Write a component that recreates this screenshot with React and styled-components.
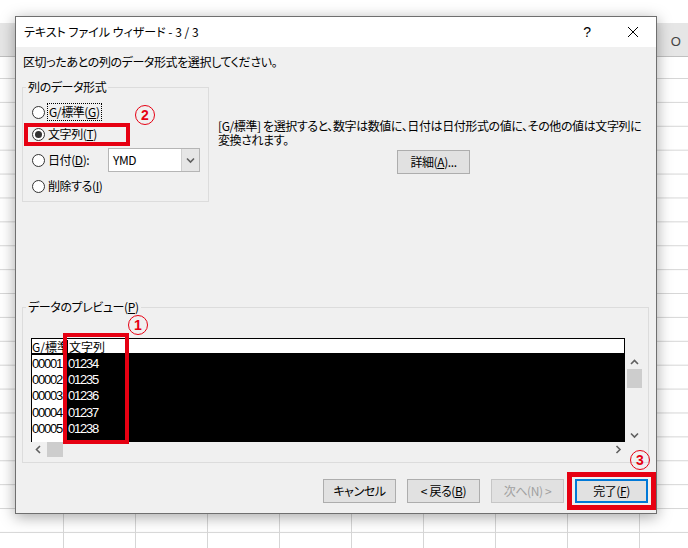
import React from 'react';
import styled, { createGlobalStyle } from 'styled-components';

const RED = '#e60012';

const GlobalStyle = createGlobalStyle`
  html, body {
    margin: 0;
    padding: 0;
  }
  body {
    font-family: "Noto Sans CJK JP", "Liberation Sans", sans-serif;
    font-size: 12px;
    font-feature-settings: "palt";
    letter-spacing: -0.4px;
    color: #000;
  }
`;

const Sheet = styled.div`
  position: relative;
  width: 688px;
  height: 548px;
  overflow: hidden;
  background-color: #fff;
  background-image: linear-gradient(to bottom, #d6d6d6 1px, transparent 1px),
    linear-gradient(to right, #d6d6d6 1px, transparent 1px);
  background-size: 100% 23.9px, 72px 100%;
  background-position: 0 78px, 63px 0;
`;

const SheetTop = styled.div`
  height: 23px;
  background: #fff;
`;

const ColumnHeader = styled.div`
  display: grid;
  grid-template-columns: 639px 72px;
  height: 33px;
  background: #e6e6e6;
  border-bottom: 1px solid #c0c0c0;
`;

const HeaderCell = styled.div`
  display: flex;
  align-items: center;
  justify-content: center;
  padding-top: 4px;
  border-left: 1px solid #cfcfcf;
  color: #444;
  font-family: "Liberation Sans", sans-serif;
  font-size: 13px;
`;

const Dialog = styled.div`
  position: absolute;
  left: 15px;
  top: 16px;
  width: 640px;
  height: 496px;
  display: flex;
  flex-direction: column;
  background: #f0f0f0;
  border: 1px solid #6f6f6f;
  box-shadow: 0 3px 14px rgba(0, 0, 0, 0.35);
`;

const TitleBar = styled.div`
  display: flex;
  align-items: center;
  height: 30px;
  background: #fff;
`;

const Title = styled.div`
  flex: 1;
  padding-left: 8px;
  line-height: 16px;
  letter-spacing: 0;
`;

const TitleButton = styled.div`
  width: 46px;
  height: 30px;
  display: flex;
  align-items: center;
  justify-content: center;
  font-family: "Liberation Sans", sans-serif;
  font-size: 14px;
`;

const Body = styled.div`
  flex: 1;
  display: flex;
  flex-direction: column;
  padding: 7px 7px 9px 6px;
`;

const Instruction = styled.div`
  padding-left: 1px;
  line-height: 16px;
`;

const TopRow = styled.div`
  display: flex;
  margin-top: 9px;
`;

const Group = styled.fieldset`
  flex: none;
  margin: 0;
  min-width: 0;
  border: 1px solid #dcdcdc;
  padding: ${(p) => p.$padding};
  width: ${(p) => p.$width || 'auto'};
  margin-top: ${(p) => p.$top || '0'};
  box-sizing: border-box;
`;

const Legend = styled.legend`
  padding: 0 2px;
  margin-left: ${(p) => p.$shift}px;
  line-height: 16px;
`;

const RadioList = styled.div`
  display: flex;
  flex-direction: column;
  gap: 6px;
`;

const RadioRow = styled.div`
  position: relative;
  display: flex;
  align-items: center;
  gap: 3px;
  min-height: 16px;
  line-height: 16px;
`;

const Radio = styled.span`
  position: relative;
  width: 11px;
  height: 11px;
  border: 1px solid #333;
  border-radius: 50%;
  background: #fff;
  flex: none;

  &::after {
    content: '';
    display: ${(p) => (p.$checked ? 'block' : 'none')};
    position: absolute;
    left: 2px;
    top: 2px;
    width: 7px;
    height: 7px;
    border-radius: 50%;
    background: #333;
  }
`;

const FocusLabel = styled.span`
  outline: 1px dotted #000;
  outline-offset: 0;
  padding: 0 1px;
`;

const U = styled.span`
  text-decoration: underline;
  text-underline-offset: 1px;
`;

const Combo = styled.div`
  margin-left: auto;
  width: 92px;
  height: 24px;
  box-sizing: border-box;
  display: flex;
  align-items: stretch;
  background: #fff;
  border: 1px solid #b5b5b5;
`;

const ComboText = styled.div`
  flex: 1;
  display: flex;
  align-items: center;
  padding-left: 4px;
  font-size: 12px;
`;

const ComboButton = styled.div`
  width: 17px;
  display: flex;
  align-items: center;
  justify-content: center;
  background: #e6e6e6;
  border-left: 1px solid #cfcfcf;
`;

const DescPanel = styled.div`
  flex: 1;
  min-width: 0;
  display: flex;
  flex-direction: column;
  align-items: center;
  margin-left: 9px;
  padding-top: 40px;
`;

const DescText = styled.div`
  align-self: stretch;
  line-height: 14px;
  white-space: nowrap;
`;

const Button = styled.div`
  position: relative;
  width: 73px;
  height: 24px;
  box-sizing: border-box;
  display: flex;
  align-items: center;
  justify-content: center;
  margin-top: ${(p) => p.$top || '0'};
  background: #e1e1e1;
  border: 1px solid ${(p) => (p.$default ? '#0078d7' : p.$disabled ? '#c6c6c6' : '#adadad')};
  box-shadow: ${(p) => (p.$default ? 'inset 0 0 0 1px #0078d7' : 'none')};
  color: ${(p) => (p.$disabled ? '#a0a0a0' : '#000')};
  line-height: 16px;
`;

const PreviewArea = styled.div`
  position: relative;
  display: grid;
  grid-template-columns: 594px 15px;
  grid-template-rows: 17px 87px 15px;
  column-gap: 2px;
`;

const PreviewHeader = styled.div`
  display: grid;
  grid-template-columns: 35px 1fr;
  align-items: center;
  background: #fff;
  border: 1px solid #000;
  border-bottom: 2px solid #000;
  line-height: 13px;
  letter-spacing: 0;
`;

const HeadCell = styled.div`
  overflow: ${(p) => (p.$clip ? 'hidden' : 'visible')};
  white-space: nowrap;
  padding-left: ${(p) => p.$pad || '0'};
  border-left: ${(p) => (p.$divider ? '1px solid #000' : 'none')};
`;

const DataArea = styled.div`
  display: flex;
  flex-direction: column;
  border-left: 1px solid #000;
  background: linear-gradient(to right, #fff 34px, #000 34px);
  padding-top: 1px;
`;

const DataRow = styled.div`
  display: grid;
  grid-template-columns: 34px 1fr;
  height: 16.2px;
  align-items: center;
  font-family: "Liberation Sans", sans-serif;
  font-size: 13px;
  letter-spacing: -1.2px;
  line-height: 16px;
`;

const DataCell = styled.div`
  overflow: hidden;
  white-space: nowrap;
  color: ${(p) => (p.$dark ? '#fff' : '#000')};
  padding-left: ${(p) => (p.$dark ? '2px' : '0')};
`;

const VScroll = styled.div`
  grid-column: 2;
  grid-row: 2;
  display: flex;
  flex-direction: column;
`;

const HScroll = styled.div`
  grid-column: 1;
  grid-row: 3;
  display: flex;
  align-items: stretch;
`;

const Arrow = styled.div`
  width: ${(p) => (p.$horizontal ? '14px' : '100%')};
  height: ${(p) => (p.$horizontal ? '100%' : '14px')};
  display: flex;
  align-items: center;
  justify-content: center;
  margin-left: ${(p) => (p.$push ? 'auto' : '0')};
  margin-top: ${(p) => (p.$pushDown ? 'auto' : '0')};
`;

const Thumb = styled.div`
  background: #cdcdcd;
  width: ${(p) => (p.$horizontal ? '16px' : '100%')};
  height: ${(p) => (p.$horizontal ? '100%' : '19px')};
  margin-left: ${(p) => (p.$horizontal ? '2px' : '0')};
`;

const ButtonRow = styled.div`
  display: flex;
  justify-content: flex-end;
  gap: 11px;
  margin-top: 16px;
  padding-right: 1px;
`;

const RedBox = styled.div`
  position: absolute;
  left: ${(p) => p.$l}px;
  top: ${(p) => p.$t}px;
  width: ${(p) => p.$w}px;
  height: ${(p) => p.$h}px;
  box-sizing: border-box;
  border: ${(p) => p.$b || 4}px solid ${RED};
  pointer-events: none;
`;

const Mark = styled.div`
  position: absolute;
  left: ${(p) => p.$l}px;
  top: ${(p) => p.$t}px;
  width: 20px;
  height: 20px;
  box-sizing: border-box;
  border: 1.5px solid ${RED};
  border-radius: 50%;
  display: flex;
  align-items: center;
  justify-content: center;
  color: ${RED};
  font-family: "Liberation Sans", sans-serif;
  font-weight: bold;
  font-size: 14px;
  letter-spacing: 0;
  line-height: 1;
`;

const Chevron = ({ dir }) => {
  const pts = {
    up: '1,6 4.5,2.5 8,6',
    down: '1,2.5 4.5,6 8,2.5',
    left: '6,1 2.5,4.5 6,8',
    right: '2.5,1 6,4.5 2.5,8',
  }[dir];
  return (
    <svg width="9" height="9" viewBox="0 0 9 9">
      <polyline points={pts} fill="none" stroke="#606060" strokeWidth="1.6" />
    </svg>
  );
};

const rows = [
  ['00001', '01234'],
  ['00002', '01235'],
  ['00003', '01236'],
  ['00004', '01237'],
  ['00005', '01238'],
];

const App = () => {
  return (
    <>
      <GlobalStyle />
      <Sheet>
        <SheetTop />
        <ColumnHeader>
          <div />
          <HeaderCell>O</HeaderCell>
        </ColumnHeader>

        <Dialog>
          <TitleBar>
            <Title>テキスト ファイル ウィザード - 3 / 3</Title>
            <TitleButton>?</TitleButton>
            <TitleButton>
              <svg width="12" height="12" viewBox="0 0 12 12">
                <path d="M1 1 L11 11 M11 1 L1 11" stroke="#000" strokeWidth="1" />
              </svg>
            </TitleButton>
          </TitleBar>

          <Body>
            <Instruction>区切ったあとの列のデータ形式を選択してください。</Instruction>

            <TopRow>
              <Group $width="187px" $padding="9px 8px 7px 9px">
                <Legend $shift={-6}>列のデータ形式</Legend>
                <RadioList>
                  <RadioRow>
                    <Radio />
                    <FocusLabel>
                      G/標準(<U>G</U>)
                    </FocusLabel>
                  </RadioRow>
                  <RadioRow>
                    <Radio $checked />
                    <span>
                      文字列(<U>T</U>)
                    </span>
                    <RedBox $l={-8} $t={-3} $w={106} $h={23} />
                    <Mark $l={103} $t={-21}>2</Mark>
                  </RadioRow>
                  <RadioRow>
                    <Radio />
                    <span>
                      日付(<U>D</U>):
                    </span>
                    <Combo>
                      <ComboText>YMD</ComboText>
                      <ComboButton>
                        <Chevron dir="down" />
                      </ComboButton>
                    </Combo>
                  </RadioRow>
                  <RadioRow>
                    <Radio />
                    <span>
                      削除する(<U>I</U>)
                    </span>
                  </RadioRow>
                </RadioList>
              </Group>

              <DescPanel>
                <DescText>
                  [G/標準] を選択すると、数字は数値に、日付は日付形式の値に、その他の値は文字列に
                  <br />
                  変換されます。
                </DescText>
                <Button $top="3px">
                  詳細(<U>A</U>)...
                </Button>
              </DescPanel>
            </TopRow>

            <Group $top="97px" $padding="23px 8px 5px 8px">
              <Legend $shift={-5}>
                データのプレビュー(<U>P</U>)
              </Legend>
              <PreviewArea>
                <PreviewHeader>
                  <HeadCell $clip>G/標準</HeadCell>
                  <HeadCell $divider $pad="1px">
                    文字列
                  </HeadCell>
                </PreviewHeader>
                <div />
                <DataArea>
                  {rows.map(([a, b]) => (
                    <DataRow key={a}>
                      <DataCell>{a}</DataCell>
                      <DataCell $dark>{b}</DataCell>
                    </DataRow>
                  ))}
                </DataArea>
                <VScroll>
                  <Arrow>
                    <Chevron dir="up" />
                  </Arrow>
                  <Thumb />
                  <Arrow $pushDown>
                    <Chevron dir="down" />
                  </Arrow>
                </VScroll>
                <HScroll>
                  <Arrow $horizontal>
                    <Chevron dir="left" />
                  </Arrow>
                  <Thumb $horizontal />
                  <Arrow $horizontal $push>
                    <Chevron dir="right" />
                  </Arrow>
                </HScroll>
                <RedBox $l={32} $t={-5} $w={66} $h={111} />
                <Mark $l={97} $t={-23}>1</Mark>
              </PreviewArea>
            </Group>

            <ButtonRow>
              <Button>キャンセル</Button>
              <Button>
                &lt; 戻る(<U>B</U>)
              </Button>
              <Button $disabled>次へ(N) &gt;</Button>
              <Button $default>
                完了(<U>F</U>)
                <RedBox $l={-9} $t={-8} $w={89} $h={38} $b={5} />
                <Mark $l={54} $t={-30}>3</Mark>
              </Button>
            </ButtonRow>
          </Body>
        </Dialog>
      </Sheet>
    </>
  );
};

export default App;
